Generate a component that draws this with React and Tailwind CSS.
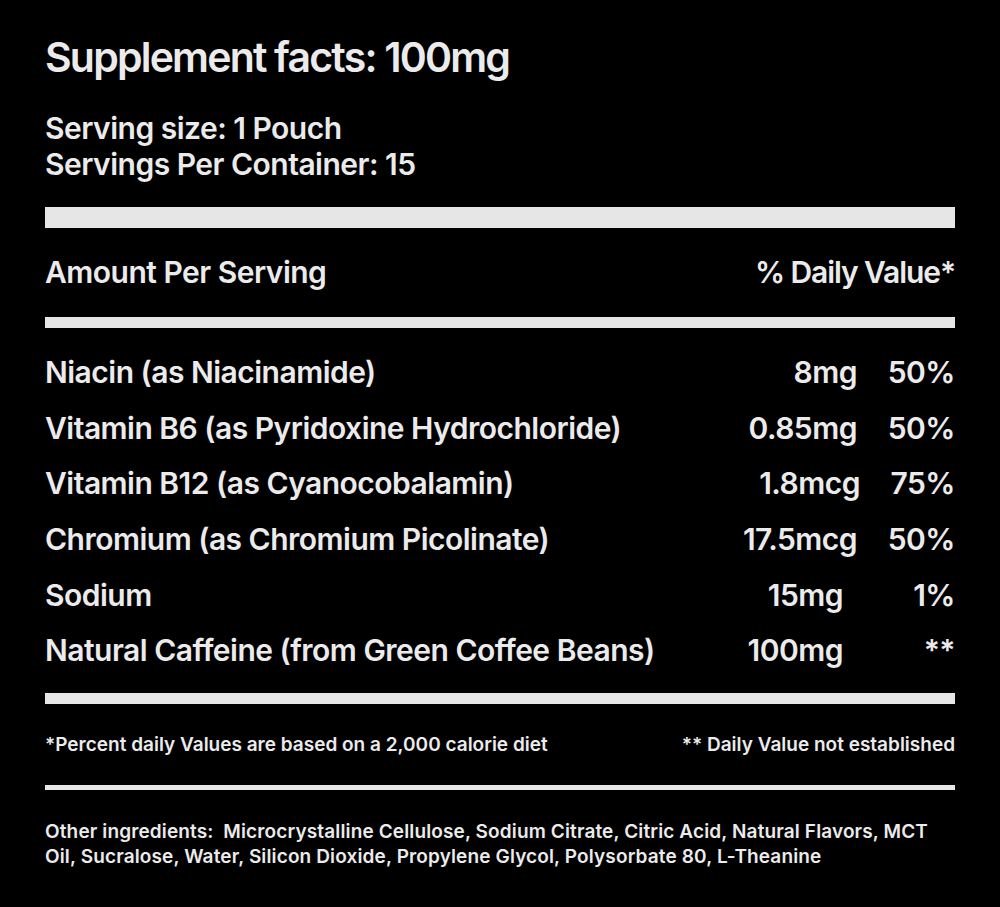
import React from "react";

const rows = [
  { name: "Niacin (as Niacinamide)", amount: "8mg", pct: "50%", gap: "mr-[28px]" },
  { name: "Vitamin B6 (as Pyridoxine Hydrochloride)", amount: "0.85mg", pct: "50%", gap: "mr-[28px]" },
  { name: "Vitamin B12 (as Cyanocobalamin)", amount: "1.8mcg", pct: "75%", gap: "mr-[25px]" },
  { name: "Chromium (as Chromium Picolinate)", amount: "17.5mcg", pct: "50%", gap: "mr-[28px]" },
  { name: "Sodium", amount: "15mg", pct: "1%", gap: "mr-[42px]" },
  { name: "Natural Caffeine (from Green Coffee Beans)", amount: "100mg", pct: "**", gap: "mr-[42px]" },
];

function App() {
  return (
    <div className="w-[1000px] h-[907px] bg-black text-[#ebebeb] font-['Inter','Liberation_Sans',sans-serif] font-semibold px-[45px] overflow-hidden">
      <h1 className="pt-[33px] text-[41px] leading-[48px] tracking-[-0.044em]">
        Supplement facts: 100mg
      </h1>

      <div className="mt-[29px] text-[30px] leading-[36px] tracking-[-0.017em]">
        <div>Serving size: 1 Pouch</div>
        <div>Servings Per Container: 15</div>
      </div>

      <div className="mt-[25px] h-[21px] bg-[#e6e6e6]" />

      <div className="mt-[26px] flex justify-between text-[30px] leading-[36px] tracking-[-0.017em]">
        <span>Amount Per Serving</span>
        <span className="tracking-[-0.036em]">% Daily Value*</span>
      </div>

      <div className="mt-[27px] h-[11px] bg-[#e6e6e6]" />

      <div className="mt-[17px] text-[30px] tracking-[-0.017em]">
        {rows.map((r) => (
          <div key={r.name} className="flex items-center h-[55.6px]">
            <span className="flex-1">{r.name}</span>
            <span className={r.gap}>{r.amount}</span>
            <span className="w-[70px] text-right">{r.pct}</span>
          </div>
        ))}
      </div>

      <div className="mt-[14px] h-[11px] bg-[#e6e6e6]" />

      <div className="mt-[27px] flex justify-between text-[19px] leading-[28px]">
        <span>*Percent daily Values are based on a 2,000 calorie diet</span>
        <span>** Daily Value not established</span>
      </div>

      <div className="mt-[26px] h-[5px] bg-[#e6e6e6]" />

      <p className="mt-[29px] text-[19px] leading-[25px] tracking-[0.007em]">
        Other ingredients:&nbsp; Microcrystalline Cellulose, Sodium Citrate, Citric Acid, Natural Flavors, MCT
        <br />
        Oil, Sucralose, Water, Silicon Dioxide, Propylene Glycol, Polysorbate 80, L-Theanine
      </p>
    </div>
  );
}

export default App;
